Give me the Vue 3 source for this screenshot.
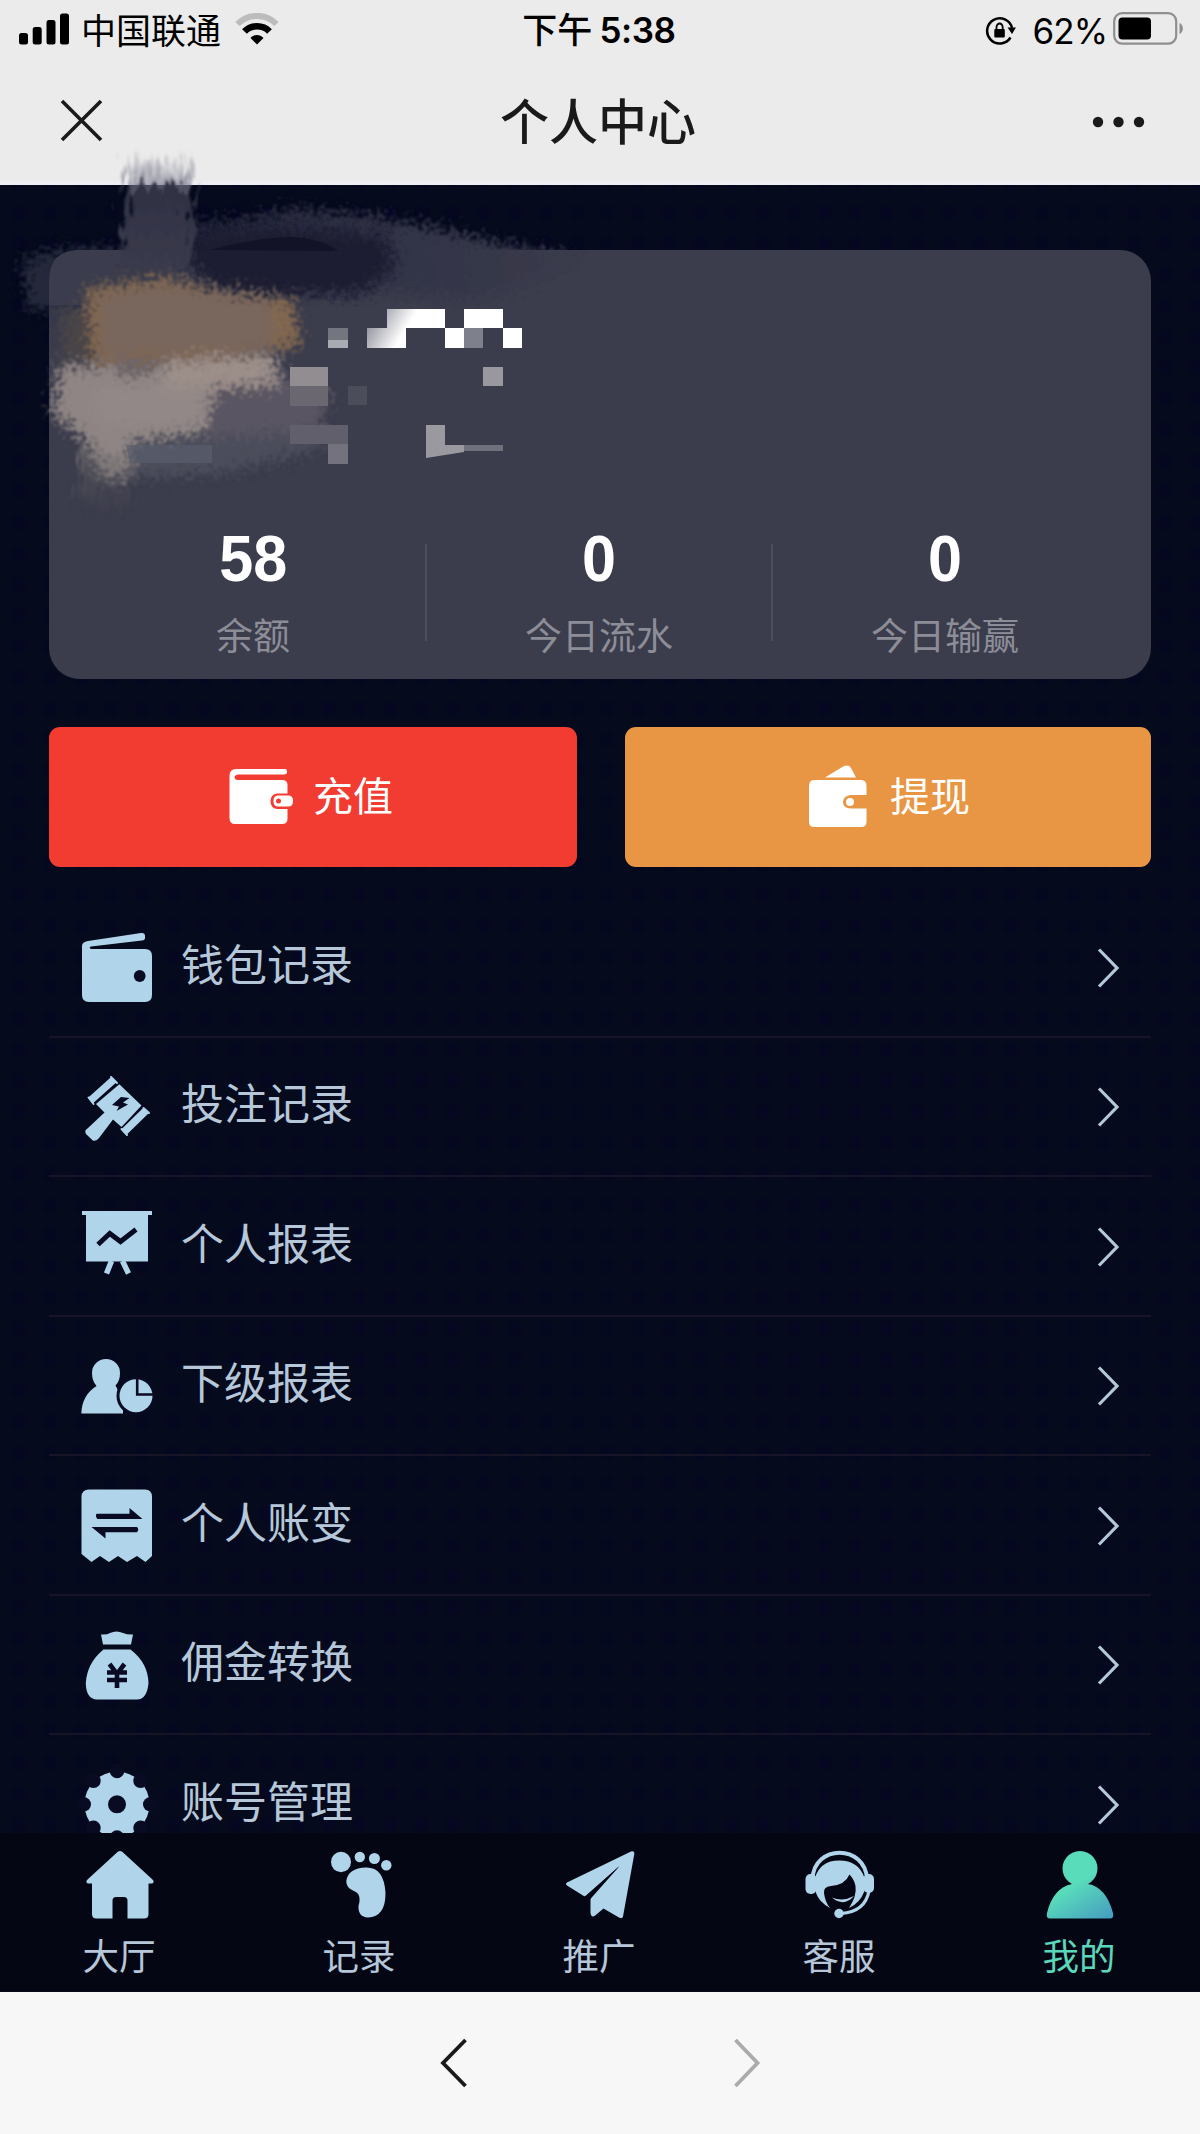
<script setup>
const stats = [
  { value: '58', label: '余额' },
  { value: '0', label: '今日流水' },
  { value: '0', label: '今日输赢' },
]
const rows = [
  { id: 'wallet', label: '钱包记录' },
  { id: 'bet', label: '投注记录' },
  { id: 'board', label: '个人报表' },
  { id: 'team', label: '下级报表' },
  { id: 'bill', label: '个人账变' },
  { id: 'bag', label: '佣金转换' },
  { id: 'gear', label: '账号管理' },
]
const tabs = [
  { id: 'home', label: '大厅' },
  { id: 'foot', label: '记录' },
  { id: 'plane', label: '推广' },
  { id: 'service', label: '客服' },
  { id: 'me', label: '我的' },
]
const notches = [0, 45, 90, 135, 180, 225, 270, 315]
</script>

<template>
  <div class="page">
    <header class="top">
      <div class="status">
        <div class="side left">
          <svg class="signal" width="50" height="32" viewBox="0 0 50 32">
            <rect x="0" y="20" width="9" height="11.5" rx="2.5" />
            <rect x="13.7" y="14" width="9" height="17.5" rx="2.5" />
            <rect x="27.5" y="7" width="9" height="24.5" rx="2.5" />
            <rect x="41" y="0.5" width="9" height="31" rx="2.5" />
          </svg>
          <span class="carrier">中国联通</span>
          <svg class="wifi" width="44" height="32" viewBox="0 0 44 32">
            <path d="M2.5 11 C13 .2 31 .2 41.500 11" fill="none" stroke="#bcbcbc" stroke-width="6" />
            <path d="M9.500 18.500 C16 11.500 28 11.500 34.500 18.500" fill="none" stroke="#000" stroke-width="6.500" />
            <path d="M15.500 25 C19 21 25 21 28.500 25 L22 31.500Z" />
          </svg>
        </div>
        <div class="clock"><span>下午</span><b>5:38</b></div>
        <div class="side right">
          <svg width="32" height="30" viewBox="0 0 32 30">
            <path d="M25.500 21.500 A12.600 12.600 0 1 1 27 12" fill="none" stroke="#000" stroke-width="2.500" />
            <path d="M22.500 11.500 H31 L27 18Z" />
            <rect x="9.300" y="13" width="10.500" height="8.500" rx="1" />
            <path d="M11.500 14 V11 a3.100 3.500 0 0 1 6.200 0 V14" fill="none" stroke="#000" stroke-width="1.800" />
          </svg>
          <span class="pct">62%</span>
          <svg class="battery" width="71" height="34" viewBox="0 0 71 34">
            <rect x="1.200" y="1.200" width="62" height="30.500" rx="8" fill="none" stroke="#8f8f8f" stroke-width="2.200" />
            <rect x="5.500" y="5.500" width="32.500" height="22" rx="4" />
            <path d="M66.500 11 C71 12.500 71 20.500 66.500 22Z" fill="#8f8f8f" />
          </svg>
        </div>
      </div>
      <div class="nav">
        <svg class="close" width="44" height="44" viewBox="0 0 44 44"><path d="M2 2 L41 41 M41 2 L2 41" stroke="#1a1a1a" stroke-width="3.600" /></svg>
        <h1>个人中心</h1>
        <svg class="more" width="54" height="12" viewBox="0 0 54 12"><circle cx="6" cy="6" r="5.200" /><circle cx="26.500" cy="6" r="5.200" /><circle cx="47" cy="6" r="5.200" /></svg>
      </div>
    </header>

    <main>
      <section class="card">
        <div v-for="s in stats" :key="s.label" class="stat">
          <strong>{{ s.value }}</strong>
          <span>{{ s.label }}</span>
        </div>
      </section>

      <div class="actions">
        <button class="red">
          <svg width="66" height="58" viewBox="0 0 66 58" fill="#fff">
            <path d="M7 1 H56 Q58 1 58 4 Q58 6.500 55 6.500 H9 Q5.500 7 5.500 9.500 Q6 12 9 12 H53 Q58.500 12 58.500 17 V51 Q58.500 56 53 56 H6 Q.5 56 .5 50 V8 Q.5 1 7 1Z" />
            <path d="M48 25.500 H66 V41 H48 Q41.500 40 41.500 33 Q41.500 26.500 48 25.500Z" fill="#f23c32" />
            <rect x="44.500" y="27.500" width="19.500" height="11" rx="4.500" /><circle cx="49.500" cy="33" r="2.500" fill="#f23c32" />
          </svg>
          <span>充值</span>
        </button>
        <button class="orange">
          <svg width="60" height="64" viewBox="0 0 60 64" fill="#fff">
            <path d="M17 12.500 L36 1 Q41 -.5 43 3 L48 12.500Z" />
            <path d="M6 15 H53 Q58.500 15 58.500 21 V30 H43 Q35 31 35 37 Q35 43 43 43.500 H58.500 V57 Q58.500 62 53 62 H6 Q1 62 1 57 V21 Q1 15 6 15Z" />
            <circle cx="42" cy="37" r="4" />
          </svg>
          <span>提现</span>
        </button>
      </div>

      <ul class="list">
        <li v-for="r in rows" :key="r.id">
          <svg class="ico" width="72" height="73" viewBox="0 0 72 73">
            <g v-if="r.id === 'wallet'">
              <path d="M1 14 Q1 10 7 9 L60 1 Q64 .5 64 4 V6 Q64 8 61 8.500 L10 14.500 Q8 15 9 16.500 Q10 17 12 17 H64 Q71 17 71 24 V63 Q71 70 64 70 H8 Q1 70 1 63Z" />
              <circle class="cut" cx="58.700" cy="44" r="5.900" />
            </g>
            <g v-else-if="r.id === 'bet'">
              <path d="M9.500 29.500 L33 8.500 M43.500 60.500 L65 39.500" fill="none" stroke="#b0d5ea" stroke-width="7.500" />
              <path d="M7.500 26.500 L12.500 33 M30 6 L36 12 M40.500 58 L46 64 M62.500 37 L68 42" stroke="#b0d5ea" stroke-width="2" stroke-linecap="round" />
              <path d="M38.300 13.300 L60.500 34.500 L40.500 56 L32 48.500 L18 67 Q15 71 11.500 69.300 L5 63 Q3 59 6.500 57.500 L23.500 41.500 L15 33Z" />
              <path class="cut" d="M40 26 L31 34 L38 35.500 L35.500 40 L47 33.500 L42 31.500 L48.500 27Z" />
            </g>
            <g v-else-if="r.id === 'board'">
              <path d="M1 0 H71 V4 H67 V50.500 H5 V4 H1Z" />
              <path d="M30.500 50 L25.500 62.500 M41.500 50 L47.500 62.500" stroke="#b0d5ea" stroke-width="5.500" />
              <path d="M17 33.500 L28.800 22.500 L39.500 30.500 L55 18.500" fill="none" stroke="#080b22" stroke-width="5" />
            </g>
            <g v-else-if="r.id === 'team'">
              <path d="M.3 63.500 Q1 45 15.500 36 Q11 31 11 23 A14 14 0 0 1 39 23 Q39 31 34.500 35.500 L42 50 V63.500Z" />
              <circle class="cut" cx="55" cy="45.700" r="19.500" />
              <circle cx="55" cy="45.700" r="16.500" />
              <path d="M56.200 28 V44.500 H72" fill="none" stroke="#080b22" stroke-width="2.600" />
            </g>
            <g v-else-if="r.id === 'bill'">
              <path d="M8 -.5 H64 Q71 -.5 71 7 V66 L64.500 72 L56 66 L46 72 L37 66 L28 72 L19 66 L10.500 72 L.5 64 V7 Q.5 -.5 8 -.5Z" />
              <path class="cut" d="M15.500 23.700 H48.500 V18 L61.500 29 H16.500 Q14 26.500 15.500 23.700Z M10.500 37 H56 Q58.500 39.500 56 42.300 H24.500 V48.500Z" />
            </g>
            <g v-else-if="r.id === 'bag'">
              <path d="M20 5.500 Q26 6 29 4 Q35.500 1 42 4 Q47 6 52 5.500 L50 15.500 H22Z M22.500 20.500 H49.500 Q67 34 67.500 54 Q66 70.500 56 70.500 H16 Q5 70 4.800 54 Q6 34 22.500 20.500Z" />
              <path d="M28.500 35 L36 45 L43.500 35 M26 43.500 H46 M26 51 H46 M36 44 V59" fill="none" stroke="#080b22" stroke-width="4.600" />
            </g>
            <g v-else transform="translate(0 -.7)">
              <circle cx="36" cy="36" r="32.500" />
              <g class="cut">
                <ellipse v-for="a in notches" :key="a" cx="36" cy="2.500" rx="7.300" ry="7.500" :transform="`rotate(${a} 36 36)`" />
                <circle cx="36" cy="36" r="9" />
              </g>
            </g>
          </svg>
          <span>{{ r.label }}</span>
          <svg class="arrow" width="24" height="42" viewBox="0 0 24 42"><path d="M2 2.500 L20 21 L2 39.500" fill="none" stroke="#b3c8d8" stroke-width="3.200" /></svg>
        </li>
      </ul>

      <nav class="tabs">
        <a v-for="t in tabs" :key="t.id" :class="{ on: t.id === 'me' }">
          <svg width="68" height="68" viewBox="0 0 68 68">
            <path v-if="t.id === 'home'" d="M31.500 1 Q34 -1 36.500 1 L67 29 Q68.500 32 66 32.500 H62.500 V63 Q62.500 67.500 58 67.500 H41.500 V49 Q41 46 38 46 H30 Q27 46 26.500 49 V67.500 H10.500 Q6 67.500 6 63 V32.500 H2 Q-.5 32 1 29Z" />
            <g v-else-if="t.id === 'foot'">
              <ellipse cx="15" cy="11" rx="10" ry="10.200" /><circle cx="33.800" cy="6" r="5.200" /><circle cx="48.400" cy="7.500" r="5.500" /><circle cx="60.300" cy="14.200" r="5.200" />
              <path d="M40 16.500 Q58 16 59.500 42 Q59.500 66 42 66.500 Q32 66 32.500 55 Q36 43 28 40 Q20 37 20.300 30 Q22 17 40 16.500Z" />
            </g>
            <g v-else-if="t.id === 'plane'">
              <path d="M1 31.500 L65 .5 Q68.500 -.5 68.300 3 L57 65.500 Q56 68.500 53 66.500 L37.500 57.500 L28.500 65 Q25 66.500 24.500 62 V47 L53.500 15 L20 44.500 Q18.500 46 17 44.500 L1 34.500 Q-1 33 1 31.500Z" />
              <path d="M19 46 L53.500 15 L23.500 49Z" class="cut" />
            </g>
            <g v-else-if="t.id === 'service'">
              <path d="M6.500 28 C8 -7 59 -7 61 28" fill="none" stroke="#b0d5ea" stroke-width="4" />
              <path d="M9 27 Q14 9.500 33 9.500 Q53 9.500 58.500 27 V40 Q54 52 43 57 Q51 45 49.500 35 Q48 28 43.500 23.500 Q39 34 25 35 Q17 36 18 42 Q19 51 24 57 Q13 51 10 42Z" />
              <rect x="-.5" y="23" width="11" height="20" rx="5" /><rect x="57.500" y="23" width="10.500" height="19" rx="5" />
              <path d="M63 40 Q59 61 35 62.500" fill="none" stroke="#b0d5ea" stroke-width="3.200" />
              <circle cx="33" cy="62.500" r="4.700" /><path d="M26 46.500 Q37 51 48 45 Q38 56.500 26 46.500Z" />
            </g>
            <g v-else>
              <defs><linearGradient id="mint" x1=".35" y1=".1" x2=".9" y2="1"><stop offset=".35" stop-color="#59dcba" /><stop offset="1" stop-color="#469fc0" /></linearGradient></defs>
              <path fill="url(#mint)" d="M26 33 A17.500 17.500 0 1 1 42 33 Q60 36 67 62 Q68.500 67.500 63.500 67.500 H4.500 Q-.5 67.500 1 62 Q7 37 26 33Z" />
            </g>
          </svg>
          <span>{{ t.label }}</span>
        </a>
      </nav>
    </main>

    <footer>
      <svg width="28" height="52" viewBox="0 0 28 52"><path d="M25.500 3 L3 26 L25.500 49" fill="none" stroke="#1a1a1a" stroke-width="3.800" /></svg>
      <svg width="28" height="52" viewBox="0 0 28 52"><path d="M2.500 3 L24.500 26 L2.500 49" fill="none" stroke="#ababab" stroke-width="3.800" /></svg>
    </footer>

    <!-- brush strokes and mosaic hiding the avatar and account name -->
    <svg class="redact" width="620" height="380" viewBox="0 140 620 380">
      <defs>
        <filter id="rough" x="-20%" y="-20%" width="140%" height="140%">
          <feTurbulence type="fractalNoise" baseFrequency=".22" numOctaves="4" seed="4" result="n" />
          <feGaussianBlur in="SourceGraphic" stdDeviation="4" result="soft" />
          <feDisplacementMap in="soft" in2="n" scale="38" xChannelSelector="R" yChannelSelector="G" />
          <feGaussianBlur stdDeviation=".9" />
        </filter>
        <filter id="bristle" x="-20%" y="-20%" width="140%" height="140%">
          <feTurbulence type="fractalNoise" baseFrequency=".2 .05" numOctaves="4" seed="8" result="n" />
          <feGaussianBlur in="SourceGraphic" stdDeviation="2" result="soft" />
          <feDisplacementMap in="soft" in2="n" scale="40" xChannelSelector="R" yChannelSelector="G" />
          <feGaussianBlur stdDeviation=".9" />
        </filter>
        <linearGradient id="up" x1="0" y1="0" x2="0" y2="1"><stop offset="0" stop-color="#8a8a9c" stop-opacity="0" /><stop offset=".28" stop-color="#77778a" stop-opacity=".75" /><stop offset=".3" stop-color="#303143" /><stop offset="1" stop-color="#3a3b4d" /></linearGradient>
        <linearGradient id="down" x1="0" y1="0" x2="0" y2="1"><stop offset="0" stop-color="#7e7a79" /><stop offset="1" stop-color="#4a4750" stop-opacity="0" /></linearGradient>
        <linearGradient id="fleck" x1="0" y1="0" x2="1" y2=".3"><stop offset="0" stop-color="#777986" /><stop offset=".6" stop-color="#fff" /></linearGradient>
        <linearGradient id="rightward" x1="0" y1="0" x2="1" y2="0"><stop offset="0" stop-color="#202236" /><stop offset=".45" stop-color="#303245" /><stop offset="1" stop-color="#3a3b4c" /></linearGradient>
      </defs>
      <g filter="url(#rough)">
        <path d="M22 258 L60 250 L130 248 L170 250 V300 L60 308 L28 312Z" fill="#2d2e41" opacity=".8" />
        <path d="M185 222 Q250 222 290 208 L370 216 L440 228 L520 248 L575 256 L480 296 L190 275Z" fill="url(#rightward)" />
      </g>
      <path d="M62 250 H240 V305 H49 V281 Q49 250 80 250Z" fill="#3b3c4d" />
      <g filter="url(#rough)">
        <path d="M186 236 Q270 222 385 236 L395 265 L365 292 Q280 298 210 284 L185 260Z" fill="#1c1d32" />
      </g>
      <path d="M210 250 Q255 238 290 237 Q320 238 338 251Z" fill="#121326" />
      <path d="M130 154 L150 160 L190 156 L195 262 L122 265 L126 190Z" fill="url(#up)" filter="url(#bristle)" />
      <g filter="url(#rough)">
        <path d="M64 310 H100 V362 H62Z" fill="#494547" />
        <path d="M86 288 L165 278 L225 292 L292 300 L300 346 L220 356 L94 364Z" fill="#82684f" />
        <path d="M100 296 L165 287 L270 302 L272 346 L102 354Z" fill="#79665d" />
        <path d="M90 430 L300 430 L330 445 L230 472 L105 480Z" fill="#4b4d5c" />
        <path d="M200 380 L290 376 L330 390 L320 432 L200 436Z" fill="#5a5562" />
        <path d="M58 366 L90 366 L200 358 L275 354 L282 385 L215 388 L205 430 L130 442 L128 475 L105 478 L85 440 L54 414Z" fill="#8f8584" />
        <path d="M165 362 L270 354 V382 L165 392Z" fill="#9c8e89" />
        <path d="M115 358 L168 362 L150 375 L120 377Z" fill="#6c6467" />
      </g>
      <path d="M80 445 L130 460 L135 520 L78 515Z" fill="url(#down)" opacity=".7" filter="url(#bristle)" />
      <path d="M126 445 H212 V463 H130Z" fill="#595d6c" opacity=".7" />
      <path d="M97 387 H203 V424 H97Z" fill="#968c8a" opacity=".5" filter="url(#rough)" />
      <g shape-rendering="crispEdges">
        <rect x="328" y="328" width="20" height="20" fill="#74767f" /><rect x="328" y="340" width="20" height="8" fill="#aaabb2" />
        <path d="M387 309 H445 V328 H406 V348 H367 V328 H387Z" fill="url(#fleck)" />
        <path d="M464 309 H503 V328 H522 V348 H503 V328 H464 V348 H445 V328 H464Z" fill="#fff" />
        <rect x="464" y="328" width="19" height="20" fill="#7e818b" />
        <rect x="483" y="367" width="20" height="19" fill="#98989e" />
        <rect x="290" y="367" width="38" height="19" fill="#918d91" /><rect x="290" y="386" width="38" height="20" fill="#6b6770" />
        <rect x="348" y="386" width="19" height="19" fill="#4b4d5b" />
        <path d="M290 425 H348 V464 H328 V444 H290Z" fill="#625f6c" /><rect x="328" y="444" width="20" height="20" fill="#74727c" />
        <rect x="464" y="445" width="39" height="6" fill="#70717b" />
      </g>
      <path d="M426 425 H445 V445 H464 V452 L426 458Z" fill="#9a999f" />
    </svg>
  </div>
</template>

<style>
body { margin: 0; }
</style>

<style scoped>
.page {
  position: relative;
  width: 1200px;
  height: 2134px;
  overflow: hidden;
  display: flex;
  flex-direction: column;
  font-family: "Liberation Sans", "Noto Sans CJK SC", sans-serif;
  background: #ebebeb;
}
.page * { box-sizing: border-box; }
svg { display: block; flex: none; }
.top { height: 185px; flex: none; background: linear-gradient(#ebebeb 180px, #eeeef4 182px); }
.status { height: 60px; display: grid; grid-template-columns: 1fr auto 1fr; align-items: center; padding: 0 16px 0 19px; }
.side { display: flex; align-items: center; height: 60px; }
.left .signal { margin-top: -2px; }
.carrier { font-size: 35px; line-height: 60px; margin: 3px 0 0 12px; width: 140px; }
.wifi { margin: -2px 0 0 14px; }
.clock { display: flex; align-items: center; font-size: 35px; line-height: 60px; font-weight: 500; font-family: "Inter", "Noto Sans CJK SC", sans-serif; margin-left: -5px; }
.clock b { margin-left: 7px; font-weight: 600; letter-spacing: -.4px; }
.right { justify-content: flex-end; padding-top: 1px; }
.pct { font: 35px/60px "Inter", sans-serif; margin: 0 6px 0 16px; letter-spacing: -1px; }
.battery { margin-top: -3px; }
.nav { height: 125px; display: flex; justify-content: space-between; align-items: flex-start; padding: 39px 54px 0 60px; }
.nav h1 { margin: -11px 0 0 0; font-size: 49px; line-height: 70px; font-weight: 500; color: #1a1a1a; }
.nav .more { margin-top: 17px; fill: #1a1a1a; }
main {
  height: 1807px;
  flex: none;
  display: flex;
  flex-direction: column;
  padding-top: 65px;
  background:
    radial-gradient(circle at 50% 50%, rgba(6, 3, 36, .55) 0 5px, transparent 9px) 3px 12px / 31px 31px,
    #050a1c;
}
.card { margin: 0 49px; height: 429px; flex: none; border-radius: 31px; background: #3b3c4c; display: flex; align-items: flex-end; padding: 0 33px 16px 31px; }
.stat { flex: 1; display: flex; flex-direction: column; align-items: center; position: relative; }
.stat + .stat::before { content: ""; position: absolute; left: -1px; top: 22px; width: 2px; height: 97px; background: #4d4e58; }
.stat strong { color: #fff; font-size: 65px; line-height: 74px; transform: scaleX(.94); }
.stat span { color: #8c8d97; font-size: 37px; line-height: 50px; margin-top: 17px; }
.actions { display: flex; gap: 48px; padding: 48px 49px 0; }
.actions button { flex: 1; height: 140px; border: 0; border-radius: 11px; display: flex; align-items: center; justify-content: center; color: #fff; font: 40px/58px "Noto Sans CJK SC", sans-serif; padding: 0; }
.actions .red { background: #f23c32; gap: 18px; padding-right: 4px; }
.actions .orange { background: #e89644; gap: 22px; padding-left: 2px; }
.red span, .orange span { margin-top: -6px; }
.list { list-style: none; margin: 31px 49px 0; padding: 0; height: 935px; flex: none; overflow: hidden; }
.list li { height: 139.5px; display: flex; align-items: center; padding: 0 30px 0 32px; border-bottom: 2px solid #171428; color: #b5c7d9; }
.list li span { font-size: 43px; line-height: 64px; margin: -2px auto 0 28px; }
.list .arrow { margin-top: 2px; }
.ico { fill: #b0d5ea; overflow: visible; margin-top: 3px; }
.cut { fill: #080b22; }
.tabs { height: 158px; flex: none; background: #050614; display: flex; }
.tabs a { flex: 1; display: flex; flex-direction: column; align-items: center; padding-top: 18px; color: #b5c7d9; }
.tabs svg { fill: #b0d5ea; overflow: visible; }
.tabs .cut { fill: #050614; }
.tabs span { font-size: 36.500px; line-height: 50px; margin: 14px 2px 0 0; }
.tabs .on { color: #5cd6ba; }
footer { height: 142px; flex: none; background: #f7f7f7; display: flex; justify-content: center; gap: 265px; padding-top: 45px; }
.redact { position: absolute; left: 0; top: 140px; pointer-events: none; }
</style>
